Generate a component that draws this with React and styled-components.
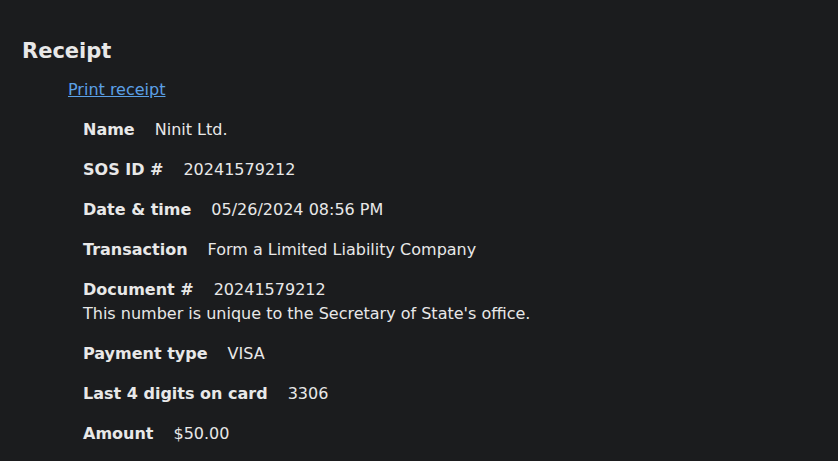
import styled, { createGlobalStyle } from "styled-components";

const Global = createGlobalStyle`
  html, body {
    margin: 0;
    background: #1b1c1e;
  }
  body {
    font-family: "DejaVu Sans", Verdana, sans-serif;
    color: #e8e8e8;
  }
`;

const rows = [
  { label: "Name", value: "Ninit Ltd." },
  { label: "SOS ID #", value: "20241579212" },
  { label: "Date & time", value: "05/26/2024 08:56 PM" },
  { label: "Transaction", value: "Form a Limited Liability Company" },
  {
    label: "Document #",
    value: "20241579212",
    note: "This number is unique to the Secretary of State's office.",
  },
  { label: "Payment type", value: "VISA" },
  { label: "Last 4 digits on card", value: "3306" },
  { label: "Amount", value: "$50.00" },
];

const App = () => {
  return (
    <Page>
      <Global />
      <Title>Receipt</Title>
      <Body>
        <PrintLink href="#">Print receipt</PrintLink>
        <List>
          {rows.map((r) => (
            <Item key={r.label}>
              <Line>
                <Label>{r.label}</Label>
                <span>{r.value}</span>
              </Line>
              {r.note && <Line>{r.note}</Line>}
            </Item>
          ))}
        </List>
      </Body>
    </Page>
  );
};

const Page = styled.div`
  padding: 38px 22px 0;
  height: 461px;
  box-sizing: border-box;
  overflow: hidden;
`;

const Title = styled.h1`
  margin: 0;
  font-size: 21px;
  line-height: 26px;
  font-weight: bold;
`;

const Body = styled.div`
  padding-left: 46px;
  margin-top: 14px;
`;

const PrintLink = styled.a`
  display: block;
  color: #5ba0e6;
  font-size: 16px;
  line-height: 24px;
  text-decoration: underline;
`;

const List = styled.div`
  display: flex;
  flex-direction: column;
  gap: 16px;
  padding-left: 15px;
  margin-top: 16px;
`;

const Item = styled.div`
  font-size: 16px;
  line-height: 24px;
`;

const Line = styled.div`
  display: flex;
  gap: 20px;
`;

const Label = styled.span`
  font-weight: bold;
`;

export default App;
